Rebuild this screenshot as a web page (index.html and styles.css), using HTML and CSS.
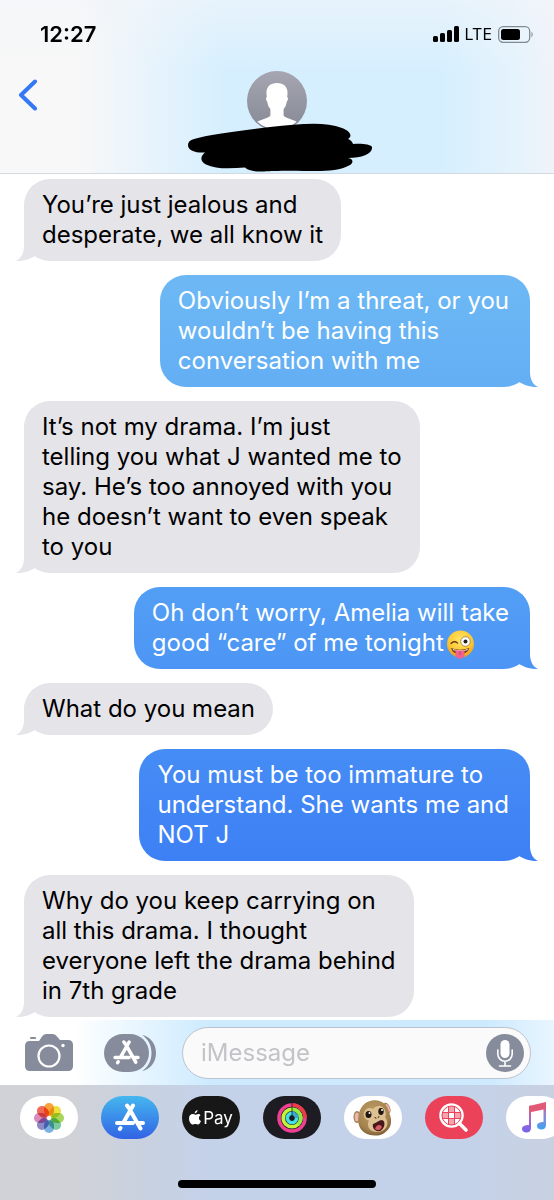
FILE: index.html
```html
<!DOCTYPE html>
<html lang="en">
<head>
<meta charset="UTF-8">
<meta name="viewport" content="width=device-width, initial-scale=1.0">
<title>Messages</title>
<link rel="stylesheet" href="styles.css">
</head>
<body>

<header class="header">
    <div class="status-bar">
        <span class="time">12:27</span>
        <div class="status-icons">
            <svg width="26" height="16" viewBox="0 0 26 16" aria-hidden="true">
                <rect x="0" y="10" width="5" height="6" rx="1.5"/>
                <rect x="7" y="7" width="5" height="9" rx="1.5"/>
                <rect x="14" y="4" width="5" height="12" rx="1.5"/>
                <rect x="21" y="0" width="5" height="16" rx="1.5"/>
            </svg>
            <span class="carrier">LTE</span>
            <svg width="36" height="17" viewBox="0 0 36 17" aria-hidden="true">
                <rect x="0.7" y="0.7" width="31" height="15.6" rx="4.5" fill="none" stroke="#808a91" stroke-width="1.3"/>
                <rect x="3" y="3" width="19" height="11" rx="2.5"/>
                <path d="M33.5 5.5q2.4 3 0 6z" fill="#808a91"/>
            </svg>
        </div>
    </div>
    <div class="nav">
        <button class="back" aria-label="Back">
            <svg width="20" height="32" viewBox="0 0 20 32"><path d="M17 2.500 3 16l14 13.500" fill="none" stroke="#3478f6" stroke-width="4" stroke-linecap="round" stroke-linejoin="round"/></svg>
        </button>
        <div class="contact">
            <svg class="avatar" width="60" height="60" viewBox="0 0 60 60" role="img" aria-label="Contact photo">
                <defs>
                    <linearGradient id="avatarFill" x1="0" y1="0" x2="0" y2="1"><stop offset="0" stop-color="#a5a6b1"/><stop offset="1" stop-color="#868995"/></linearGradient>
                    <clipPath id="avatarClip"><circle cx="30" cy="30" r="28.500"/></clipPath>
                </defs>
                <circle cx="30" cy="30" r="30" fill="url(#avatarFill)"/>
                <path clip-path="url(#avatarClip)" fill="#fff" d="M30 12c-7 0-11 4-10.500 11l.4 3c-1.500.3-.8 3.500.5 5 .3 3 1.200 5 3 7v6.500c-1.400 3-9.400 3.500-13.400 6.500v9h40v-9c-4-3-12-3.500-13.400-6.500V38c1.800-2 2.700-4 3-7 1.300-1.500 2-4.700.5-5l.4-3C41 16 37 12 30 12z"/>
            </svg>
            <svg class="scribble" width="186" height="50" viewBox="0 0 186 50" aria-hidden="true">
                <path d="M6 16C20 12 52 8 82 4c30-3 54-6 72 1 8 3 11 8 6 11 3 1 5 4 5 5 9-.5 17 0 19 3 1 7-10 11-24 11 5 1 6 4 2 7-12 7-28 6-46 6-18-.5-32 0-40 .5-9 .5-16-1-19-4-14 1-29 2-39-3-6-3-6-8-1-12C8 30 0 28 0 22c0-3 2-5 6-6z"/>
            </svg>
        </div>
    </div>
</header>

<main class="chat">
    <p class="bubble received">You’re just jealous and<br>desperate, we all know it</p>
    <p class="bubble sent">Obviously I’m a threat, or you<br>wouldn’t be having this<br>conversation with me</p>
    <p class="bubble received">It’s not my drama. I’m just<br>telling you what J wanted me to<br>say. He’s too annoyed with you<br>he doesn’t want to even speak<br>to you</p>
    <p class="bubble sent">Oh don’t worry, Amelia will take<br>good “care” of me tonight<svg class="emoji" width="29" height="29" viewBox="0 0 29 29" role="img" aria-label="Winking face with tongue">
        <defs><radialGradient id="face" cx=".5" cy=".35" r=".65"><stop offset="0" stop-color="#ffe768"/><stop offset=".65" stop-color="#fdc934"/><stop offset="1" stop-color="#e99a1c"/></radialGradient></defs>
        <circle cx="14.500" cy="14" r="13.500" fill="url(#face)"/>
        <path d="M5 13.500q3-3.500 6.500-.5" fill="none" stroke="#704216" stroke-width="1.500" stroke-linecap="round"/>
        <circle cx="19.500" cy="11.500" r="4.800" fill="#fff" stroke="#8b6420" stroke-width=".7"/>
        <circle cx="19.500" cy="11.500" r="2" fill="#28201b"/>
        <path d="M5 18q9 3.500 18.500 0-2 6-9.500 6T5 18z" fill="#77391b"/>
        <path d="M6.500 19q8 2.500 15.500 0l-.7 1.200q-7 1.500-14 0z" fill="#fff"/>
        <path d="M9.500 20.500h9V25c0 5-9 5-9 0z" fill="#f2638c"/>
        <path d="M14 21v4" stroke="#c83d68" stroke-width="1"/>
    </svg></p>
    <p class="bubble received">What do you mean</p>
    <p class="bubble sent">You must be too immature to<br>understand. She wants me and<br>NOT J</p>
    <p class="bubble received">Why do you keep carrying on<br>all this drama. I thought<br>everyone left the drama behind<br>in 7th grade</p>
</main>

<form class="composer">
    <button type="button" class="icon-button" aria-label="Camera">
        <svg width="48" height="37" viewBox="0 0 48 37">
            <path fill="#868c9b" d="M5 7h9l3-4.500Q18.500 0 21 0h7q2.500 0 4 2.500L35 6h8q5 0 5 5v21q0 5-5 5H5q-5 0-5-5V12q0-5 5-5z"/>
            <path d="M6 4h4" stroke="#868c9b" stroke-width="2.200" stroke-linecap="round"/>
            <circle cx="24" cy="22" r="10.500" fill="none" stroke="#fff" stroke-width="2.200"/>
            <circle cx="38" cy="11.500" r="1.700" fill="#fff"/>
        </svg>
    </button>
    <button type="button" class="icon-button" aria-label="Apps">
        <svg width="52" height="38" viewBox="0 0 52 38">
            <path d="M38 1c8.500 1.500 14 9 14 18s-5.500 16.500-14 18c6-4 9.500-10 9.500-18S44 5 38 1z" fill="#868c9b"/>
            <rect width="45" height="38" rx="19" fill="#868c9b"/>
            <g transform="translate(22.500 19) scale(.88)"><use href="#storeMark"/></g>
        </svg>
    </button>
    <div class="field">
        <input type="text" placeholder="iMessage" aria-label="iMessage">
        <button type="button" class="mic" aria-label="Dictate">
            <svg width="38" height="38" viewBox="0 0 38 38">
                <circle cx="19" cy="19" r="19" fill="#868c9b"/>
                <rect x="14.500" y="6" width="9" height="18" rx="4.500" fill="#fff"/>
                <path d="M11.800 16v4a7.200 7.200 0 0 0 14.400 0v-4M19 27.500V32M13.500 32h11" fill="none" stroke="#fff" stroke-width="1.600" stroke-linecap="round"/>
            </svg>
        </button>
    </div>
</form>

<footer class="drawer">
    <nav class="apps">
        <button class="app photos" aria-label="Photos">
            <svg width="32" height="32" viewBox="-16 -16 32 32">
                <g class="petals">
                    <rect x="-5" y="-15" width="10" height="13" rx="5" fill="#f9a23c"/>
                    <rect x="-5" y="-15" width="10" height="13" rx="5" fill="#ecdf40" transform="rotate(45)"/>
                    <rect x="-5" y="-15" width="10" height="13" rx="5" fill="#a8d65a" transform="rotate(90)"/>
                    <rect x="-5" y="-15" width="10" height="13" rx="5" fill="#7acaa0" transform="rotate(135)"/>
                    <rect x="-5" y="-15" width="10" height="13" rx="5" fill="#7cb2e2" transform="rotate(180)"/>
                    <rect x="-5" y="-15" width="10" height="13" rx="5" fill="#9089c8" transform="rotate(225)"/>
                    <rect x="-5" y="-15" width="10" height="13" rx="5" fill="#d88abc" transform="rotate(270)"/>
                    <rect x="-5" y="-15" width="10" height="13" rx="5" fill="#f06a58" transform="rotate(315)"/>
                </g>
            </svg>
        </button>
        <button class="app store" aria-label="App Store">
            <svg width="32" height="30" viewBox="-16 -15 32 30">
                <g id="storeMark" fill="none" stroke="#fff" stroke-width="4" stroke-linecap="round">
                    <path d="M-3-12.500 0-8.500M3-12.500-6.500 4.500M0-8 10.500 10.500M-13 5H3M9 5h4M-9.500 10l-.6 1"/>
                </g>
            </svg>
        </button>
        <button class="app pay" aria-label="Apple Pay">
            <svg width="12" height="15" viewBox="0 0 12 15"><path fill="#fff" d="M8.500 0C8.600 1.800 7.300 3.300 5.700 3.400 5.600 1.800 7 .2 8.500 0zM11.500 5.200C10.300 6 9.900 7 10 8.200c.1 1.300.8 2.200 2 2.700-.7 1.900-1.700 3.600-3 3.600-1 0-1.400-.6-2.600-.6s-1.700.6-2.600.6C2 14.500 0 11.500 0 8.400 0 5.600 1.700 4 3.600 4c1.100 0 2 .7 2.700.7.700 0 1.700-.8 3-.8 1 0 1.800.5 2.200 1.300z"/></svg>
            <span>Pay</span>
        </button>
        <button class="app activity" aria-label="Activity">
            <svg width="30" height="30" viewBox="-15 -15 30 30" fill="none" stroke-width="3.600">
                <circle r="13" stroke="#ef3f92"/>
                <path d="M0-13A13 13 0 0 1 13 0" stroke="#ee3b45"/>
                <circle r="8.800" stroke="#c2f43a"/>
                <path d="M0-8.800A8.800 8.800 0 0 1 6 6.400" stroke="#8eec43"/>
                <circle r="4.700" stroke="#43dfe3"/>
                <path d="M0-4.700A4.700 4.700 0 0 1 4.700 0" stroke="#38a9d3"/>
                <path d="M0-15V-3" stroke="#1c1c1e" stroke-width=".8"/>
            </svg>
        </button>
        <button class="app animoji" aria-label="Animoji">
            <svg width="40" height="38" viewBox="0 0 40 38">
                <defs><radialGradient id="fur" cx=".45" cy=".35" r=".7"><stop offset="0" stop-color="#bd9c68"/><stop offset=".7" stop-color="#a5834f"/><stop offset="1" stop-color="#78592f"/></radialGradient></defs>
                <ellipse cx="4" cy="18" rx="3.500" ry="6" fill="#9a7748"/>
                <ellipse cx="4" cy="18" rx="2.400" ry="4.600" fill="#eeb5ab"/>
                <ellipse cx="34" cy="9" rx="3" ry="5.500" transform="rotate(-25 34 9)" fill="#9a7748"/>
                <ellipse cx="34.500" cy="9" rx="2" ry="4.200" transform="rotate(-25 34.500 9)" fill="#eeb5ab"/>
                <path fill="url(#fur)" d="M19 1.500c9-1.500 16 4 17 12 2 4 3 10 1 14-3 6-9 9.500-15 9-8 0-15-4-16.500-12C4 13 9 3 19 1.500z"/>
                <path fill="#ddc193" d="M20 10c4-5 11-4 12.500 3 .5 2 .5 4-.5 5 4 5 3 13-5 14.500-7 1.500-12-2-12-7 0-2 .5-3 1-4-4-1-6-4-5-8s6-6 9-3.500z"/>
                <ellipse cx="15.500" cy="15.500" rx="3" ry="3.500" fill="#20150f"/>
                <ellipse cx="28" cy="12.500" rx="2.700" ry="3.400" fill="#20150f"/>
                <circle cx="16.500" cy="14" r="1" fill="#fff"/><circle cx="29" cy="11" r="1" fill="#fff"/>
                <path d="M22 18.500l1 .7M26 17.500l-.8 1" stroke="#6a4426" stroke-width="1.200" stroke-linecap="round"/>
                <path fill="#48171a" d="M20 25c3-1 6-4 9-4 4 1 3 9-2 11-5 1-8-3-7-7z"/>
                <path fill="#d85b65" d="M22 29.500c2-4 5-4.500 7-1.500-2 4-5 4-7 1.500z"/>
            </svg>
        </button>
        <button class="app images" aria-label="Images">
            <svg width="30" height="30" viewBox="0 0 30 30">
                <circle cx="12.500" cy="12.500" r="11" fill="#f7a3af" stroke="#fff" stroke-width="2.500"/>
                <path d="M10 10h5v5h-5zM4 9V7l4-4h1v6zM16 4v5h5l-2-4zM4 16v3l4 3h1v-6zM16 16h5l-3 5h-2z" fill="#fff"/>
                <path d="M9.500 3v19M15.500 3v19M3 9.500h19M3 15.500h19" stroke="#eb4159" stroke-width="1"/>
                <circle cx="12.500" cy="12.500" r="9.500" fill="none" stroke="#eb4159" stroke-width="1"/>
                <path d="M20.500 20.500l6.500 6.500" stroke="#fff" stroke-width="3.600" stroke-linecap="round"/>
            </svg>
        </button>
        <button class="app music" aria-label="Music">
            <svg width="26" height="31" viewBox="0 0 26 31">
                <defs>
                    <linearGradient id="note" x1="0" y1="0" x2="0" y2="1"><stop offset="0" stop-color="#e9546e"/><stop offset=".5" stop-color="#b066cb"/><stop offset="1" stop-color="#6f63f2"/></linearGradient>
                    <linearGradient id="note2" x1="0" y1="0" x2="0" y2="1"><stop offset="0" stop-color="#e9546e"/><stop offset=".5" stop-color="#8c87dc"/><stop offset="1" stop-color="#3fa2f0"/></linearGradient>
                </defs>
                <path fill="url(#note)" d="M7 4l2-.5V26c0 3-2 4.500-4.500 4.500S0 29 0 27c0-3 3-4 7-4z"/>
                <path fill="url(#note2)" d="M21.500 2 24 0v23c0 3-2 4.500-4.500 4.500S15 26 15 24c0-3 3-4 6.500-4z"/>
                <path fill="#e15b78" d="M7 4 24 0v7L7 10.500z"/>
            </svg>
        </button>
    </nav>
    <div class="home-indicator"></div>
</footer>

</body>
</html>
```
FILE: styles.css
```css
* {
    box-sizing: border-box;
}
body {
    font-family: Inter, "Liberation Sans", sans-serif;
    background-color: #fff;
    color: #000;
    margin: 0;
    min-height: 100vh;
    display: flex;
    flex-direction: column;
    overflow-x: hidden;
}
button {
    border: 0;
    padding: 0;
    background: none;
    font-family: inherit;
    cursor: pointer;
}
svg {
    display: block;
    flex-shrink: 0;
}

/* header */
.header {
    height: 174px;
    border-bottom: 1px solid #d3d9de;
    background: linear-gradient(#f2f5f999, #f2f5f900 40%), linear-gradient(90deg, #f8f8f8 14%, #e6f3fc 28%, #d6effe 40%, #d6effe 80%, #e6f3fc 94%, #f0f3f9);
}
.status-bar {
    display: flex;
    justify-content: space-between;
    align-items: center;
    height: 68px;
    padding: 0 20px 0 40px;
}
.time {
    font-size: 22px;
    font-weight: 600;
}
.status-icons {
    display: flex;
    align-items: center;
    gap: 6px;
}
.carrier {
    font-size: 16px;
}
.nav {
    display: grid;
    grid-template-columns: 1fr auto 1fr;
    align-items: start;
    padding-top: 3px;
}
.back {
    justify-self: start;
    padding: 8px 18px;
}
.contact {
    position: relative;
}
.scribble {
    position: absolute;
    top: 52px;
    left: -59px;
}

/* conversation */
.chat {
    flex: 1;
    display: flex;
    flex-direction: column;
    align-items: flex-start;
    gap: 14px;
    padding: 5px 24px 3px;
}
.bubble {
    position: relative;
    margin: 0;
    padding: 11px 18px;
    border-radius: 26px;
    font-size: 24px;
    line-height: 30px;
    white-space: nowrap;
}
.bubble::after {
    content: "";
    position: absolute;
    bottom: 0;
    width: 24px;
    height: 30px;
    background: inherit;
}
.received {
    background: #e5e4e9;
}
.received::after {
    left: -8px;
    clip-path: path("M8 0V15C8 22 5 28 0 30C8 30 14 28 19 25L24 12Z");
}
.sent {
    align-self: flex-end;
    padding-right: 21px;
    color: #fff;
    background: linear-gradient(#6db8f4 275px, #529df5 600px, #3d80f5 860px) fixed;
}
.sent::after {
    right: -8px;
    clip-path: path("M16 0V15C16 22 19 28 24 30C16 30 10 28 5 25L0 12Z");
}
.emoji {
    display: inline-block;
    margin: -4px 2px;
    vertical-align: middle;
}

/* message box */
.composer {
    display: flex;
    align-items: center;
    height: 65px;
    padding: 0 23px 0 25px;
    background: linear-gradient(90deg, #fff 13%, #e3f4ff 27%, #cdeaff 38%, #cdeaff 88%, #e9f5ff);
}
.icon-button {
    margin-right: 31px;
}
.field {
    flex: 1;
    display: flex;
    align-items: center;
    min-width: 0;
    height: 52px;
    margin-left: -5px;
    padding: 0 6px 0 18px;
    border: 1px solid #bdc3cc;
    border-radius: 26px;
    background: #fafafa;
}
.field input {
    flex: 1;
    min-width: 0;
    padding: 0;
    border: 0;
    outline: 0;
    background: none;
    font-family: inherit;
    font-size: 24px;
}
.field input::placeholder {
    color: #c3c3c8;
}

/* app drawer */
.drawer {
    height: 115px;
    background: linear-gradient(90deg, #d1d2d7 12%, #c9d1e0 26%, #c4d2e9 38%, #c4d2e9 85%, #c8d1e1);
}
.apps {
    display: flex;
    gap: 23px;
    padding: 11px 20px 0;
    overflow: hidden;
}
.app {
    display: flex;
    flex-shrink: 0;
    align-items: center;
    justify-content: center;
    width: 58px;
    height: 43px;
    border-radius: 22px;
    background: #fff;
}
.petals rect {
    mix-blend-mode: multiply;
}
.store {
    background: linear-gradient(#45b7ef, #3163e5);
}
.pay {
    gap: 2px;
    background: #171717;
    color: #fff;
    font-size: 17px;
}
.activity {
    background: #1c1c22;
}
.images {
    background: #eb4159;
}
.home-indicator {
    width: 198px;
    height: 8px;
    margin: 41px auto 0;
    border-radius: 4px;
    background: #000;
}
```
